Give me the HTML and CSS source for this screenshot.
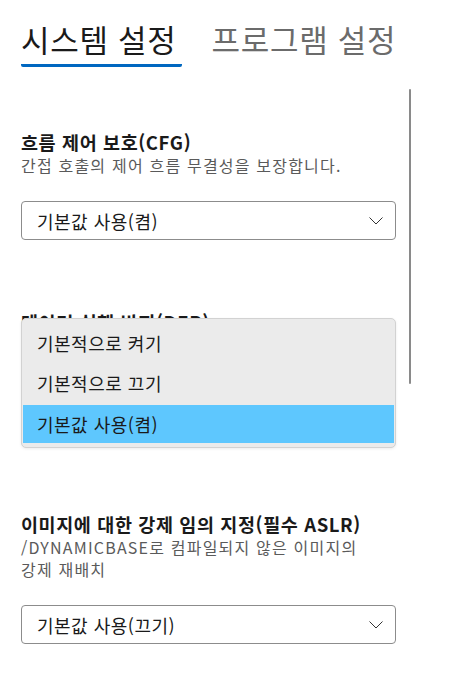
FILE: index.html
```html
<!DOCTYPE html>
<html lang="ko">
<head>
<meta charset="utf-8">
<title>Exploit protection</title>
<link rel="stylesheet" href="styles.css">
</head>
<body>
<div class="page">
  <nav class="tabs">
    <div class="tab tab-active">시스템 설정</div>
    <div class="tab">프로그램 설정</div>
  </nav>
  <main class="content">
    <section class="setting">
      <h2 class="setting-title">흐름 제어 보호(CFG)</h2>
      <p class="setting-desc">간접 호출의 제어 흐름 무결성을 보장합니다.</p>
      <div class="combo">
        <span class="combo-value">기본값 사용(켬)</span>
        <svg class="chevron" width="14" height="8" viewBox="0 0 14 8"><polyline points="0.5,0.5 7,7 13.5,0.5" fill="none" stroke="#333" stroke-width="1"/></svg>
      </div>
    </section>
    <section class="setting">
      <h2 class="setting-title">데이터 실행 방지(DEP)</h2>
      <p class="setting-desc">메모리 전용 페이지에서 코드가 실행되지<br>않도록 방지합니다.</p>
      <div class="combo-wrap">
        <div class="combo">
          <span class="combo-value">기본값 사용(켬)</span>
          <svg class="chevron" width="14" height="8" viewBox="0 0 14 8"><polyline points="0.5,0.5 7,7 13.5,0.5" fill="none" stroke="#333" stroke-width="1"/></svg>
        </div>
        <ul class="popup">
          <li class="popup-item">기본적으로 켜기</li>
          <li class="popup-item">기본적으로 끄기</li>
          <li class="popup-item popup-item-selected">기본값 사용(켬)</li>
        </ul>
      </div>
    </section>
    <section class="setting">
      <h2 class="setting-title">이미지에 대한 강제 임의 지정(필수 ASLR)</h2>
      <p class="setting-desc">/DYNAMICBASE로 컴파일되지 않은 이미지의<br>강제 재배치</p>
      <div class="combo">
        <span class="combo-value">기본값 사용(끄기)</span>
        <svg class="chevron" width="14" height="8" viewBox="0 0 14 8"><polyline points="0.5,0.5 7,7 13.5,0.5" fill="none" stroke="#333" stroke-width="1"/></svg>
      </div>
    </section>
  </main>
  <div class="scrollbar"></div>
</div>
</body>
</html>
```
FILE: styles.css
```css
* { box-sizing: border-box; }
html, body {
  margin: 0;
  padding: 0;
  background: #ffffff;
}
body {
  font-family: "Noto Sans", "Noto Sans CJK KR", sans-serif;
  color: #1a1a1a;
  width: 466px;
  height: 693px;
  overflow: hidden;
}
.page {
  position: relative;
  padding: 0 0 0 21px;
  height: 693px;
}
.tabs {
  display: flex;
  gap: 29px;
  padding-top: 19px;
}
.tab {
  font-family: "Noto Sans CJK KR", sans-serif;
  font-size: 31px;
  letter-spacing: 0.7px;
  line-height: 40px;
  color: #6b6b6b;
  padding-bottom: 5px;
  border-bottom: 3px solid transparent;
}
.tab-active {
  color: #1a1a1a;
  border-bottom: 3px solid #0067c0;
  border-radius: 0 0 2px 2px;
  padding-right: 6px;
}
.content {
  width: 375px;
  padding-top: 63px;
}
.setting {
  margin: 0 0 70px 0;
}
.setting-title {
  font-family: "Noto Sans CJK KR", sans-serif;
  font-size: 18.5px;
  letter-spacing: 0.6px;
  font-weight: 700;
  line-height: 24px;
  margin: 0;
  color: #1a1a1a;
}
.setting-desc {
  font-family: "Noto Sans CJK KR", sans-serif;
  font-size: 16px;
  letter-spacing: 1.2px;
  line-height: 22px;
  margin: 0;
  color: #5a5a5a;
}
.combo-wrap {
  position: relative;
}
.combo {
  margin-top: 25px;
  height: 39px;
  border: 1px solid #8c8c8c;
  border-radius: 4px;
  display: flex;
  align-items: center;
  justify-content: space-between;
  padding: 0 12px 0 15px;
  background: #ffffff;
}
.combo-value {
  font-family: "Noto Sans CJK KR", sans-serif;
  font-size: 18px;
  letter-spacing: 0.5px;
  color: #1a1a1a;
}
.chevron { display: block; }
.popup {
  position: absolute;
  left: 0;
  right: 0;
  top: -85px;
  margin: 0;
  list-style: none;
  padding: 4px 1px 4px 1px;
  background: #ebebeb;
  border: 1px solid #d2d2d2;
  border-radius: 5px;
  box-shadow: 0 1px 3px rgba(0,0,0,0.08);
}
.popup-item {
  font-family: "Noto Sans CJK KR", sans-serif;
  font-size: 18px;
  letter-spacing: 0.5px;
  height: 40px;
  display: flex;
  align-items: center;
  padding-left: 14px;
  color: #1a1a1a;
}
.popup-item-selected {
  background: #5ec7fe;
  height: 38px;
  margin-top: 2px;
}
.scrollbar {
  position: absolute;
  left: 409px;
  top: 89px;
  width: 2px;
  height: 295px;
  background: #8a8a8a;
  border-radius: 1px;
}
```
